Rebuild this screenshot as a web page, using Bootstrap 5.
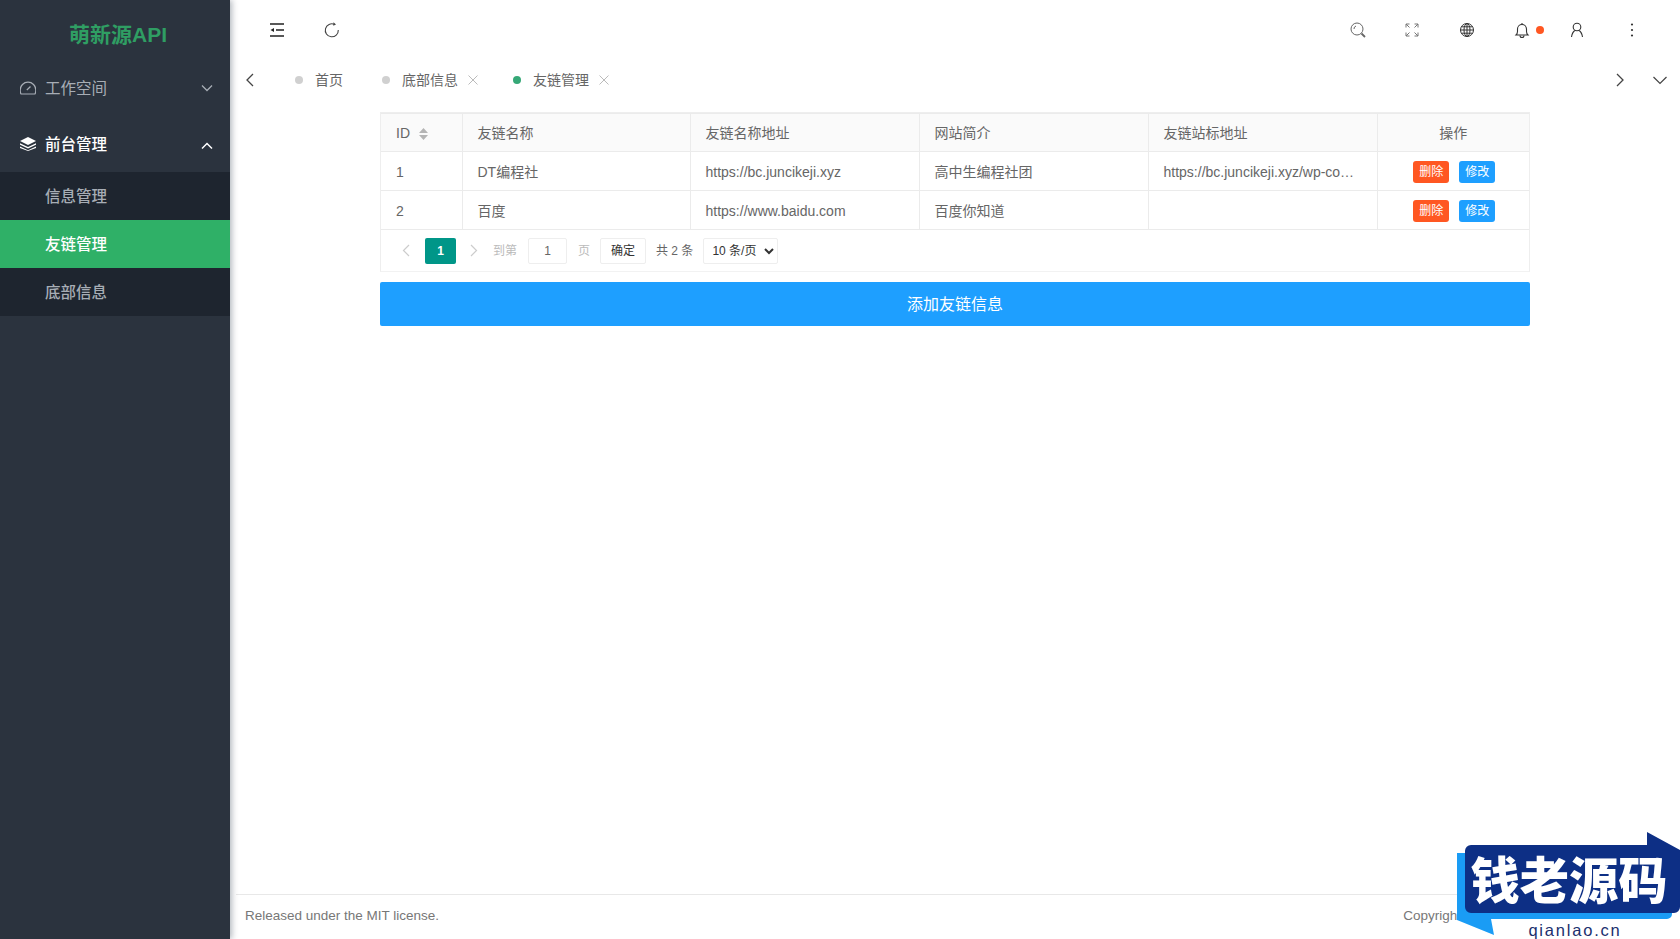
<!DOCTYPE html>
<html lang="zh-CN">
<head>
<meta charset="utf-8">
<title>友链管理</title>
<link href="https://cdn.jsdelivr.net/npm/bootstrap@5.3.0/dist/css/bootstrap.min.css" rel="stylesheet">
<style>
html,body{height:100%;overflow:hidden;background:#fff}
body{font-family:"Liberation Sans","Noto Sans CJK SC",sans-serif;font-size:14px;color:#666}
svg{display:block}
.side-rail{width:230px;flex:none;background:#2b333e;box-shadow:2px 0 6px rgba(0,21,41,.3);z-index:2}
.brand-row{height:60px;color:#2f9e63;font-size:21px;font-weight:700;padding:9px 0 0 6px}
.menu-top{height:56px;padding:0 17px 0 20px;color:#a7adb5;text-decoration:none;font-size:15.5px}
.menu-top.is-open{color:#fff;font-weight:500}
.menu-top .menu-label{margin-left:9px;flex:1;padding-top:2px}
.menu-sub{background:#1e252f}
.menu-sub a{display:flex;align-items:center;height:48px;padding:2px 0 0 45px;color:#a7adb5;text-decoration:none;font-weight:500;font-size:15.5px}
.menu-sub a.is-active{background:#2fb067;color:#fff}
.chev-open{margin-top:4px}
.main-col{min-width:0;margin-left:0}
.top-bar{height:60px;flex:none;position:relative}
.ico-cell{position:absolute;top:21px;width:18px;height:18px;color:#333}
.tab-strip{height:40px;flex:none;position:relative;color:#666}
.tab-dot{width:8px;height:8px;border-radius:50%;background:#d0d0d0;margin-right:12px;flex:none}
.tab-dot.is-on{background:#36a877}
.tab-item{position:absolute;top:0;height:40px;display:flex;align-items:center;white-space:nowrap}
.tab-x{margin-left:10px;color:#bbb}
.page-body{padding-top:12px;min-height:0}
.panel-wrap{width:1150px;margin:0 auto}
.grid-box{border:1px solid #eee;border-bottom-color:#f2f2f2}
.link-table{table-layout:fixed;margin:0;--bs-table-color:#666;--bs-table-border-color:#ebebeb;color:#666}
.link-table th,.link-table td{padding:2px 15px 0;vertical-align:middle;font-weight:400;border-top:0}
.link-table th{height:38px;background:#fafafa}
.link-table td{height:39px}
.link-table td.act-cell{padding-left:17px}
.link-table tr>*:first-child{border-left:0}
.link-table tr>*:last-child{border-right:0}
.act-btn{font-size:12px;height:22px;width:36px;padding:0;border:0;border-radius:3px;color:#fff;line-height:22px;vertical-align:middle}
.act-del{background:#ff5722}
.act-edit{background:#1e9fff;margin-left:10px}
.act-del:hover{background:#ff5722;color:#fff}
.act-edit:hover{background:#1e9fff;color:#fff}
.pager-row{height:41px;color:#666;font-size:12px;padding-left:21px}
.pager-cur{width:31px;height:26px;background:#009688;color:#fff;border-radius:2px;font-weight:700;margin:0 14px 0 15px}
.pager-muted{color:#bbb}
.pager-next{margin-right:15px}
.pager-input{width:39px;height:26px;font-size:12px;padding:0;text-align:center;border:1px solid #eee;border-radius:2px;color:#666;margin:0 11px}
.pager-ok{height:26px;width:46px;padding:1px 0 0;font-size:12px;border:1px solid #eee;border-radius:2px;color:#333;margin:0 10px}
.pager-size{height:26px;width:75px;padding:0 0 0 4px;font-size:12px;border:1px solid #eee;border-radius:2px;color:#333;margin-left:10px;appearance:auto;background-image:none}
.add-btn{height:44px;margin-top:10px;padding-top:8px;background:#1e9fff;border:0;border-radius:2px;color:#fff;font-size:16px;width:100%}
.add-btn:hover{background:#1e9fff;color:#fff}
.foot-row{height:45px;flex:none;border-top:1px solid #e8e8e8;margin-left:6px;padding:0 219px 2px 9px;color:#777;font-size:13.5px}
.stamp{position:absolute;right:0;bottom:0;width:223px;height:107px;z-index:5}
.stamp-big{font-family:"Noto Sans CJK SC",sans-serif;font-weight:900;font-size:50px;fill:#fff}
.stamp-small{font-family:"Liberation Sans",sans-serif;font-size:16.5px;fill:#1b2f6e;letter-spacing:1.8px}
</style>
</head>
<body>
<div class="d-flex vh-100 position-relative">
  <aside class="side-rail d-flex flex-column">
    <div class="brand-row d-flex align-items-center justify-content-center">萌新源API</div>
    <a class="menu-top d-flex align-items-center" href="#">
      <svg width="16" height="16" viewBox="0 0 16 16" fill="none" stroke="currentColor" stroke-width="1.2"><path d="M1 14h14c.6-1 .8-2.4.8-4a7.8 7.8 0 0 0-15.6 0c0 1.6.2 3 .8 4z"/><path d="M6.8 10 10.5 6.5"/></svg>
      <span class="menu-label">工作空间</span>
      <svg width="12" height="8" viewBox="0 0 12 8" fill="none" stroke="currentColor" stroke-width="1.3"><path d="M1 1.500 6 6.500l5-5"/></svg>
    </a>
    <a class="menu-top is-open d-flex align-items-center" href="#">
      <svg width="16" height="14" viewBox="0 0 16 14" fill="currentColor"><path d="M8 0 16 4 8 8 0 4z"/><path d="M0 6.200 8 10l8-3.800v1.600L8 11.600 0 7.800z"/><path d="M0 9.400 8 13.200l8-3.800V11L8 14 0 11z"/></svg>
      <span class="menu-label">前台管理</span>
      <svg class="chev-open" width="12" height="8" viewBox="0 0 12 8" fill="none" stroke="currentColor" stroke-width="1.500"><path d="M1 6.500 6 1.500l5 5"/></svg>
    </a>
    <nav class="menu-sub">
      <a href="#">信息管理</a>
      <a href="#" class="is-active">友链管理</a>
      <a href="#">底部信息</a>
    </nav>
  </aside>

  <div class="main-col flex-grow-1 d-flex flex-column">
    <header class="top-bar">
      <span class="ico-cell" style="left:38px"><svg width="18" height="18" viewBox="0 0 18 18" fill="none" stroke="#222" stroke-width="1.600"><path d="M2 3h14M8 9h8M2 15h14"/><path d="M6 7 2.500 9 6 11z" fill="#222" stroke="none"/></svg></span>
      <span class="ico-cell" style="left:93px"><svg width="18" height="18" viewBox="0 0 18 18" fill="none" stroke="#444" stroke-width="1.100"><path d="M11.500 3.400A6.500 6.500 0 1 0 15.300 9"/><path d="M10.500 1.200 13 3.400 10.300 4.800z" fill="#444" stroke="none"/></svg></span>
      <span class="ico-cell" style="left:1119px"><svg width="18" height="18" viewBox="0 0 18 18" fill="none" stroke="#666" stroke-width="1"><circle cx="8" cy="8" r="6"/><path d="M5 8a3 3 0 0 1 2-3"/><path d="M12.500 12.500l3.500 3.500" stroke-width="1.800"/></svg></span>
      <span class="ico-cell" style="left:1173px"><svg width="18" height="18" viewBox="0 0 18 18" fill="none" stroke="#777" stroke-width="1"><path d="M3 6.500V3h3.500M3 3l3.500 3.500M15 6.500V3h-3.500M15 3l-3.500 3.500M3 11.500V15h3.500M3 15l3.500-3.500M15 11.500V15h-3.500M15 15l-3.500-3.500"/></svg></span>
      <span class="ico-cell" style="left:1228px"><svg width="18" height="18" viewBox="0 0 18 18" fill="none" stroke="#333" stroke-width="1"><circle cx="9" cy="9" r="6.500"/><ellipse cx="9" cy="9" rx="3" ry="6.500"/><path d="M9 2.500v13M2.500 9h13M3.400 5.800h11.200M3.400 12.200h11.200"/></svg></span>
      <span class="ico-cell" style="left:1283px"><svg width="18" height="18" viewBox="0 0 18 18" fill="none" stroke="#333" stroke-width="1.100"><path d="M3 14h12c-1-1-1.500-2-1.500-3.500V8a4.500 4.500 0 0 0-9 0v2.500C4.500 12 4 13 3 14z"/><path d="M7 14.500a2 2 0 0 0 4 0M9 2v1.500"/></svg></span>
      <span class="position-absolute rounded-circle" style="left:1306px;top:26px;width:8px;height:8px;background:#ff5722"></span>
      <span class="ico-cell" style="left:1338px"><svg width="18" height="18" viewBox="0 0 18 18" fill="none" stroke="#333" stroke-width="1.100"><circle cx="9" cy="6" r="3.800"/><path d="M3.500 16c.5-3.500 2.500-6.200 3.700-6.500M14.500 16c-.5-3.500-2.500-6.200-3.700-6.500"/></svg></span>
      <span class="ico-cell" style="left:1393px"><svg width="18" height="18" viewBox="0 0 18 18" fill="#333"><circle cx="9" cy="3.500" r="1.100"/><circle cx="9" cy="9" r="1.100"/><circle cx="9" cy="14.500" r="1.100"/></svg></span>
    </header>

    <div class="tab-strip">
      <span class="tab-item" style="left:15px"><svg width="9" height="14" viewBox="0 0 9 14" fill="none" stroke="#444" stroke-width="1.300"><path d="M8 1 2 7l6 6"/></svg></span>
      <span class="tab-item" style="left:65px"><i class="tab-dot"></i>首页</span>
      <span class="tab-item" style="left:152px"><i class="tab-dot"></i>底部信息<svg class="tab-x" width="10" height="10" viewBox="0 0 10 10" stroke="currentColor" stroke-width="1"><path d="M.5.500l9 9M9.500.500l-9 9"/></svg></span>
      <span class="tab-item" style="left:283px"><i class="tab-dot is-on"></i>友链管理<svg class="tab-x" width="10" height="10" viewBox="0 0 10 10" stroke="currentColor" stroke-width="1"><path d="M.5.500l9 9M9.500.500l-9 9"/></svg></span>
      <span class="tab-item" style="left:1386px"><svg width="9" height="14" viewBox="0 0 9 14" fill="none" stroke="#444" stroke-width="1.300"><path d="M1 1l6 6-6 6"/></svg></span>
      <span class="tab-item" style="left:1423px"><svg width="14" height="9" viewBox="0 0 14 9" fill="none" stroke="#444" stroke-width="1.200"><path d="M.5 1 7 7.500 13.500 1"/></svg></span>
    </div>

    <main class="page-body flex-grow-1">
      <div class="panel-wrap">
        <div class="grid-box">
          <table class="table table-bordered link-table">
            <colgroup><col style="width:81px"><col style="width:228px"><col style="width:229px"><col style="width:229px"><col style="width:229px"><col></colgroup>
            <thead>
              <tr>
                <th><span class="d-inline-flex align-items-center gap-2">ID
                  <svg width="11" height="14" viewBox="0 0 11 14" fill="#b5b5b5"><path d="M5.500 1 10 6H1zM1 8h9l-4.500 5z"/></svg></span></th>
                <th>友链名称</th><th>友链名称地址</th><th>网站简介</th><th>友链站标地址</th><th class="text-center">操作</th>
              </tr>
            </thead>
            <tbody>
              <tr>
                <td>1</td><td>DT编程社</td><td>https://bc.juncikeji.xyz</td><td>高中生编程社团</td>
                <td class="text-nowrap">https://bc.juncikeji.xyz/wp-co…</td>
                <td class="text-center act-cell"><button class="btn act-btn act-del">删除</button><button class="btn act-btn act-edit">修改</button></td>
              </tr>
              <tr>
                <td>2</td><td>百度</td><td>https://www.baidu.com</td><td>百度你知道</td><td></td>
                <td class="text-center act-cell"><button class="btn act-btn act-del">删除</button><button class="btn act-btn act-edit">修改</button></td>
              </tr>
            </tbody>
          </table>
          <div class="pager-row d-flex align-items-center">
            <svg width="8" height="13" viewBox="0 0 8 13" fill="none" stroke="#ccc" stroke-width="1.200"><path d="M7 1 1.500 6.500 7 12"/></svg>
            <span class="pager-cur d-flex align-items-center justify-content-center">1</span>
            <svg class="pager-next" width="8" height="13" viewBox="0 0 8 13" fill="none" stroke="#ccc" stroke-width="1.200"><path d="M1 1l5.500 5.500L1 12"/></svg>
            <span class="pager-muted">到第</span>
            <input class="form-control pager-input" value="1" aria-label="page">
            <span class="pager-muted">页</span>
            <button class="btn pager-ok">确定</button>
            <span>共 2 条</span>
            <select class="form-select pager-size" aria-label="size"><option>10 条/页</option></select>
          </div>
        </div>
        <button class="btn add-btn">添加友链信息</button>
      </div>
    </main>

    <footer class="foot-row d-flex align-items-center justify-content-between">
      <span>Released under the MIT license.</span>
      <span>Copyright</span>
    </footer>
  </div>

  <svg class="stamp" viewBox="0 0 223 107" aria-label="钱老源码 qianlao.cn">
    <path d="M0 21h215v61a5 5 0 0 1-5 5H34l3 16L0 88z" fill="#1a9cf5"/>
    <path d="M190 0 223 18V75a6 6 0 0 1-6 6H14a6 6 0 0 1-6-6V19a6 6 0 0 1 6-6H190z" fill="#0d2f85"/>
    <text class="stamp-big" x="112" y="67" text-anchor="middle" textLength="197" lengthAdjust="spacingAndGlyphs">钱老源码</text>
    <text class="stamp-small" x="118" y="104" text-anchor="middle">qianlao.cn</text>
  </svg>
</div>
<script src="https://cdn.jsdelivr.net/npm/bootstrap@5.3.0/dist/js/bootstrap.bundle.min.js"></script>
</body>
</html>
